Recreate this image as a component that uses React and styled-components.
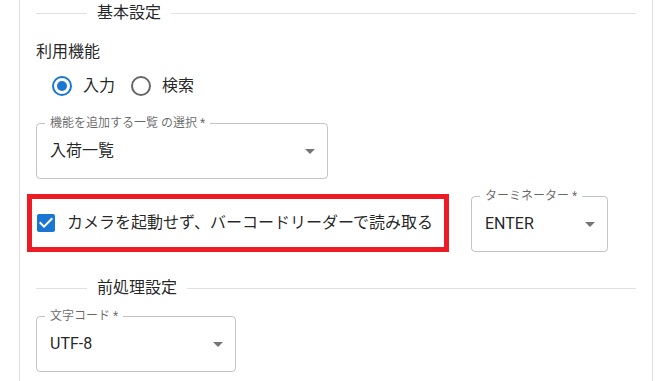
import React from 'react';
import styled, { createGlobalStyle } from 'styled-components';

const Global = createGlobalStyle`
  html, body { margin: 0; padding: 0; background: #fff; }
  body {
    font-family: Roboto, "Noto Sans CJK JP", sans-serif;
    color: rgba(0, 0, 0, 0.87);
    -webkit-font-smoothing: antialiased;
  }
`;

const Panel = styled.div`
  box-sizing: border-box;
  margin-left: 19px;
  width: 634px;
  min-height: 100vh;
  border-left: 1px solid #e0e0e0;
  border-right: 1px solid #e0e0e0;
  padding: 1px 16px 0 16px;
  display: flex;
  flex-direction: column;
`;

const SectionDivider = styled.div`
  display: flex;
  align-items: center;
  height: 24px;
  margin-top: ${p => p.$mt || 0}px;
  font-size: 16px;
  line-height: 24px;
  &::before {
    content: '';
    width: 51px;
    border-top: 1px solid rgba(0, 0, 0, 0.12);
  }
  &::after {
    content: '';
    flex: 1;
    border-top: 1px solid rgba(0, 0, 0, 0.12);
  }
`;

const SectionTitle = styled.span`
  padding: 0 10px;
  white-space: nowrap;
`;

const FieldLabel = styled.div`
  margin-top: 15px;
  font-size: 16px;
  line-height: 24px;
`;

const RadioRow = styled.div`
  display: flex;
  align-items: center;
  height: 40px;
  margin-top: 2px;
  padding-left: 14px;
`;

const RadioOption = styled.label`
  display: flex;
  align-items: center;
  gap: 9px;
  margin-right: 14px;
  font-size: 16px;
  line-height: 24px;
`;

const SelectBox = styled.div`
  position: relative;
  box-sizing: border-box;
  width: ${p => p.$w}px;
  height: 56px;
  margin-top: ${p => p.$mt || 0}px;
  margin-left: ${p => p.$ml || 0}px;
  border: 1px solid rgba(0, 0, 0, 0.23);
  border-radius: 4px;
  display: flex;
  align-items: center;
  padding: 0 5px 0 13px;
  flex-shrink: 0;
`;

const FloatLabel = styled.span`
  position: absolute;
  top: -9px;
  left: 8px;
  padding: 0 5px;
  background: #fff;
  font-size: 12px;
  line-height: 16px;
  color: rgba(0, 0, 0, 0.6);
  white-space: nowrap;
`;

const SelectValue = styled.span`
  flex: 1;
  font-size: 16px;
  line-height: 24px;
`;

const OptionRow = styled.div`
  display: flex;
  align-items: flex-end;
  margin-top: 15px;
`;

const Highlight = styled.label`
  box-sizing: border-box;
  width: 422px;
  height: 58px;
  margin-left: -9px;
  border: 5px solid #ed1c24;
  display: flex;
  align-items: center;
  gap: 9px;
  padding-left: 2px;
  font-size: 16px;
  line-height: 24px;
  white-space: nowrap;
  flex-shrink: 0;
`;

const ArrowDown = () => (
  <svg width="24" height="24" viewBox="0 0 24 24">
    <path d="M7 10l5 5 5-5z" fill="rgba(0,0,0,0.54)" />
  </svg>
);

const RadioIcon = ({ checked }) => (
  <svg width="24" height="24" viewBox="0 0 24 24">
    <circle cx="12" cy="12" r="9" fill="none" strokeWidth="2" stroke={checked ? '#1976d2' : 'rgba(0,0,0,0.6)'} />
    {checked && <circle cx="12" cy="12" r="5" fill="#1976d2" />}
  </svg>
);

const CheckIcon = () => (
  <svg width="24" height="24" viewBox="0 0 24 24">
    <path
      fill="#1976d2"
      d="M19 3H5c-1.11 0-2 .9-2 2v14c0 1.1.89 2 2 2h14c1.11 0 2-.9 2-2V5c0-1.1-.89-2-2-2zm-9 14l-5-5 1.41-1.41L10 14.17l7.59-7.59L19 8l-9 9z"
    />
  </svg>
);

const Select = ({ label, value, width, mt, ml }) => (
  <SelectBox $w={width} $mt={mt} $ml={ml}>
    <FloatLabel>{label}</FloatLabel>
    <SelectValue>{value}</SelectValue>
    <ArrowDown />
  </SelectBox>
);

export default function App() {
  return (
    <>
      <Global />
      <Panel>
        <SectionDivider>
          <SectionTitle>基本設定</SectionTitle>
        </SectionDivider>
        <FieldLabel>利用機能</FieldLabel>
        <RadioRow>
          <RadioOption>
            <RadioIcon checked />
            入力
          </RadioOption>
          <RadioOption>
            <RadioIcon />
            検索
          </RadioOption>
        </RadioRow>
        <Select label="機能を追加する一覧 の選択 *" value="入荷一覧" width={292} mt={17} />
        <OptionRow>
          <Highlight>
            <CheckIcon />
            カメラを起動せず、バーコードリーダーで読み取る
          </Highlight>
          <Select label="ターミネーター *" value="ENTER" width={137} ml={22} />
        </OptionRow>
        <SectionDivider $mt={24}>
          <SectionTitle>前処理設定</SectionTitle>
        </SectionDivider>
        <Select label="文字コード *" value="UTF-8" width={200} mt={16} />
      </Panel>
    </>
  );
}
